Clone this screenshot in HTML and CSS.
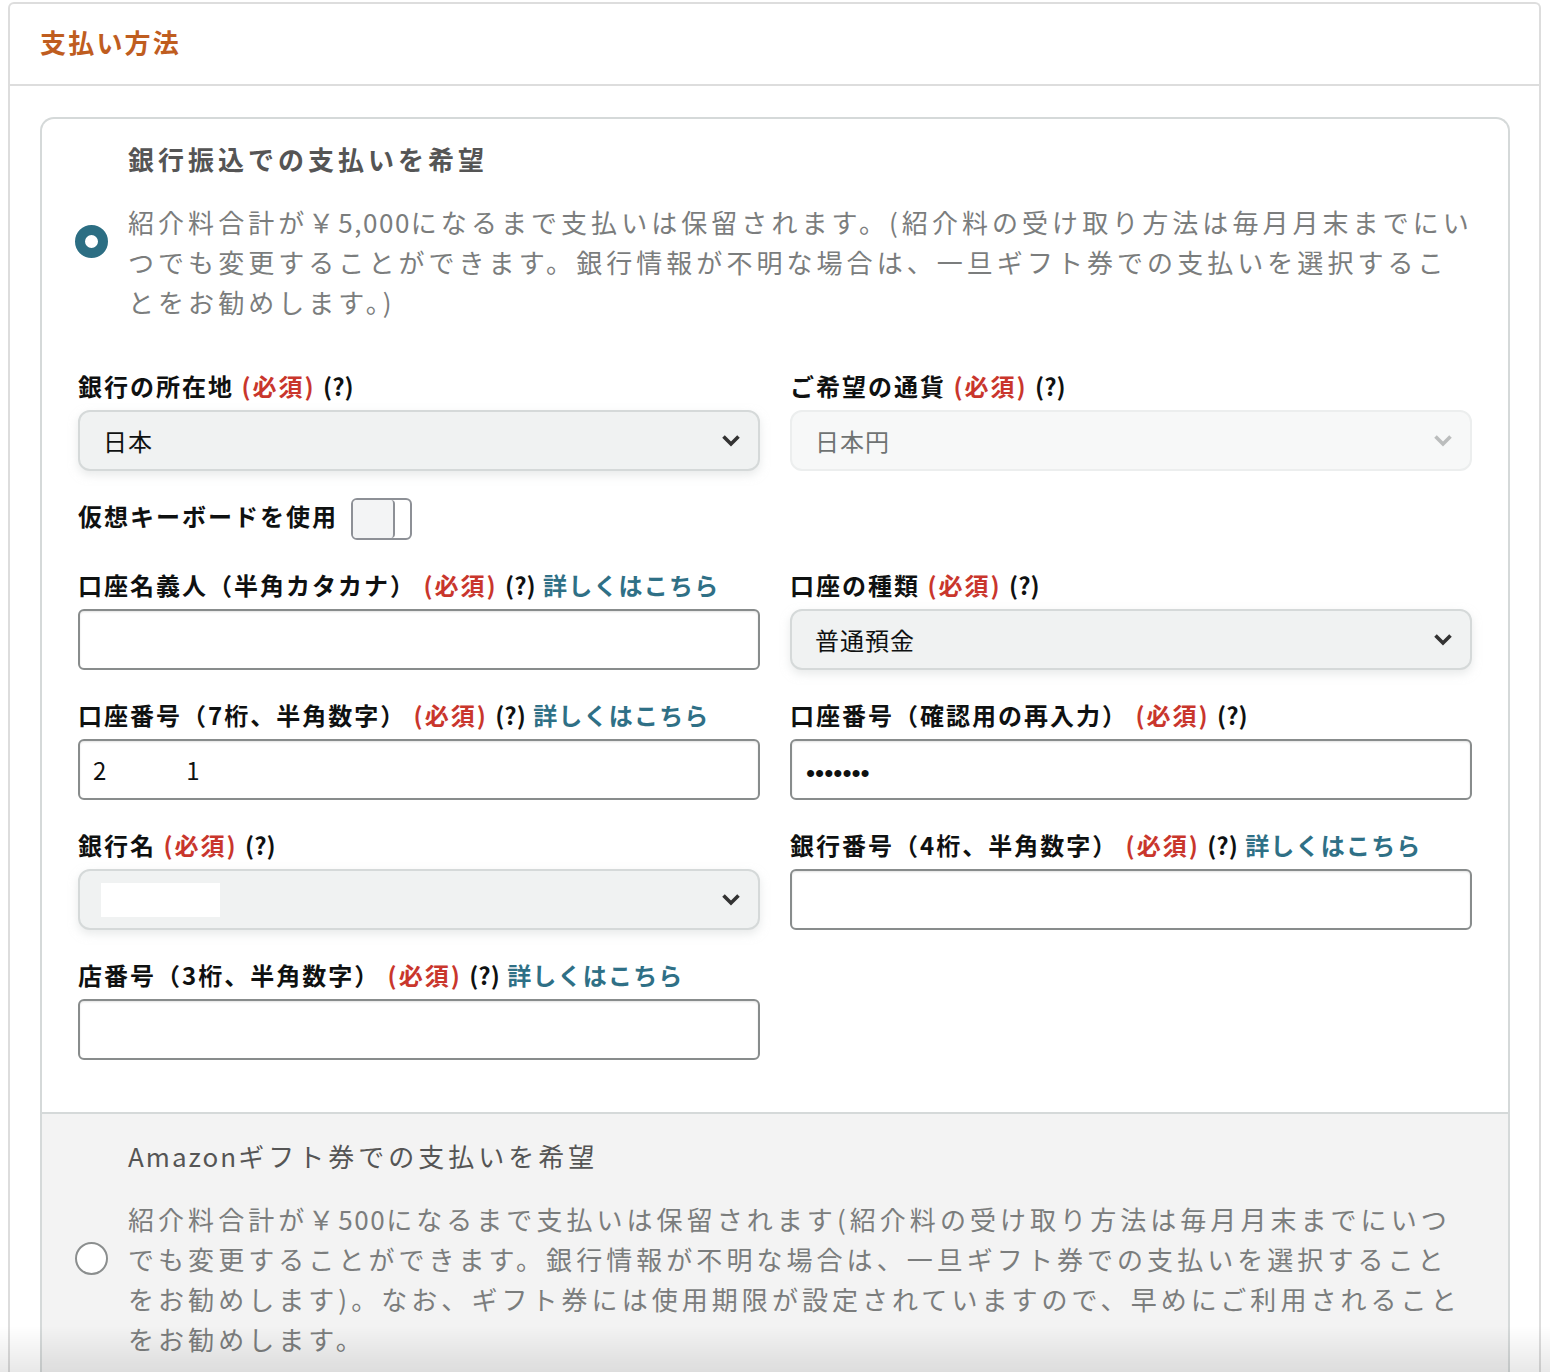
FILE: index.html
```html
<!DOCTYPE html>
<html lang="ja">
<head>
<meta charset="utf-8">
<title>支払い方法</title>
<link rel="stylesheet" href="styles.css">
</head>
<body>
<section class="panel">
  <header class="panel-header">
    <h2 class="panel-title">支払い方法</h2>
  </header>
  <div class="panel-body">
    <div class="card">
      <div class="option">
        <div class="option-row">
          <span class="radio radio-on"></span>
          <div class="option-text">
            <h3 class="option-title">銀行振込での支払いを希望</h3>
            <p class="option-desc">紹介料合計が￥<span class="latin">5,000</span>になるまで支払いは保留されます。(紹介料の受け取り方法は毎月月末までにい<br>つでも変更することができます。銀行情報が不明な場合は、一旦ギフト券での支払いを選択するこ<br>とをお勧めします。)</p>
          </div>
        </div>
        <div class="form-grid">
          <div class="field">
            <label class="field-label">銀行の所在地 <span class="req">(必須)</span> <span class="help">(?)</span></label>
            <div class="select">
              <span>日本</span>
              <svg class="chev" width="20" height="13" viewBox="0 0 20 13"><path d="M2.5 2.5 L10 10 L17.5 2.5" fill="none" stroke="currentColor" stroke-width="3.6"/></svg>
            </div>
          </div>
          <div class="field">
            <label class="field-label">ご希望の通貨 <span class="req">(必須)</span> <span class="help">(?)</span></label>
            <div class="select select-disabled">
              <span>日本円</span>
              <svg class="chev" width="20" height="13" viewBox="0 0 20 13"><path d="M2.5 2.5 L10 10 L17.5 2.5" fill="none" stroke="currentColor" stroke-width="3.6"/></svg>
            </div>
          </div>
          <div class="toggle-row">
            <span class="field-label">仮想キーボードを使用</span>
            <span class="switch"><span class="knob"></span></span>
          </div>
          <div class="field">
            <label class="field-label">口座名義人（半角カタカナ） <span class="req">(必須)</span> <span class="help">(?)</span> <a class="link">詳しくはこちら</a></label>
            <div class="input"></div>
          </div>
          <div class="field">
            <label class="field-label">口座の種類 <span class="req">(必須)</span> <span class="help">(?)</span></label>
            <div class="select">
              <span>普通預金</span>
              <svg class="chev" width="20" height="13" viewBox="0 0 20 13"><path d="M2.5 2.5 L10 10 L17.5 2.5" fill="none" stroke="currentColor" stroke-width="3.6"/></svg>
            </div>
          </div>
          <div class="field">
            <label class="field-label">口座番号（7桁、半角数字） <span class="req">(必須)</span> <span class="help">(?)</span> <a class="link">詳しくはこちら</a></label>
            <div class="input"><span>2</span><span class="digit-gap">1</span></div>
          </div>
          <div class="field">
            <label class="field-label">口座番号（確認用の再入力） <span class="req">(必須)</span> <span class="help">(?)</span></label>
            <div class="input input-pass">•••••••</div>
          </div>
          <div class="field">
            <label class="field-label">銀行名 <span class="req">(必須)</span> <span class="help">(?)</span></label>
            <div class="select select-bank">
              <span class="redact"></span>
              <svg class="chev" width="20" height="13" viewBox="0 0 20 13"><path d="M2.5 2.5 L10 10 L17.5 2.5" fill="none" stroke="currentColor" stroke-width="3.6"/></svg>
            </div>
          </div>
          <div class="field">
            <label class="field-label">銀行番号（4桁、半角数字） <span class="req">(必須)</span> <span class="help">(?)</span> <a class="link">詳しくはこちら</a></label>
            <div class="input"></div>
          </div>
          <div class="field">
            <label class="field-label">店番号（3桁、半角数字） <span class="req">(必須)</span> <span class="help">(?)</span> <a class="link">詳しくはこちら</a></label>
            <div class="input"></div>
          </div>
        </div>
      </div>
      <div class="option option-alt">
        <div class="option-row">
          <span class="radio radio-off"></span>
          <div class="option-text">
            <h3 class="option-title"><span class="latin">Amazon</span>ギフト券での支払いを希望</h3>
            <p class="option-desc">紹介料合計が￥<span class="latin">500</span>になるまで支払いは保留されます(紹介料の受け取り方法は毎月月末までにいつ<br>でも変更することができます。銀行情報が不明な場合は、一旦ギフト券での支払いを選択すること<br>をお勧めします)。なお、ギフト券には使用期限が設定されていますので、早めにご利用されること<br>をお勧めします。</p>
          </div>
        </div>
      </div>
    </div>
  </div>
</section>
<div class="fade"></div>
</body>
</html>
```

FILE: styles.css
```css
* { box-sizing: border-box; }
html, body { margin: 0; background: #fff; }
body {
  font-family: "Noto Sans CJK JP", "Noto Sans", sans-serif;
  color: #0f1111;
}

.panel {
  margin: 2px 9px 0 8px;
  border: 2px solid #dddddd;
  border-bottom: 0;
  border-radius: 6px 6px 0 0;
}
.panel-header {
  height: 82px;
  border-bottom: 2px solid #dddddd;
  display: flex;
  align-items: center;
  padding: 0 0 4px 30px;
}
.panel-title {
  margin: 0;
  font-size: 26px;
  line-height: 1;
  font-weight: 700;
  letter-spacing: 2.2px;
  color: #bf5d1f;
}
.panel-body { padding: 31px 29px 0 30px; }

.card {
  border: 2px solid #d5d9d9;
  border-bottom: 0;
  border-radius: 14px 14px 0 0;
  overflow: hidden;
}

.option-row {
  display: flex;
  align-items: center;
  padding: 20px 20px 0 33px;
}
.radio {
  flex: none;
  width: 33px;
  height: 33px;
  border-radius: 50%;
  margin: 21px 20px 0 0;
  background: #fff;
}
.radio-on { border: 10px solid #2c6e83; }
.radio-off { border: 2px solid #8b8e8e; }

.option-text { min-width: 0; }
.option-title {
  margin: 0;
  font-size: 26px;
  line-height: 40px;
  letter-spacing: 4px;
  font-weight: 700;
  color: #555555;
}
.option-desc {
  margin: 23px 0 0;
  font-size: 26px;
  line-height: 40px;
  letter-spacing: 4.05px;
  color: #7b7d7d;
  white-space: nowrap;
}
.latin { letter-spacing: 1.5px; }

.option-alt {
  background: #f3f3f3;
  border-top: 2px solid #d5d9d9;
  padding-bottom: 60px;
}
.option-alt .option-row { padding-top: 22px; }
.option-alt .option-title { font-weight: 400; }
.option-alt .option-title .latin { letter-spacing: 2px; }

.form-grid {
  display: grid;
  grid-template-columns: 1fr 1fr;
  column-gap: 30px;
  row-gap: 29px;
  padding: 48px 36px 52px 36px;
}
.field { min-width: 0; }
.field-label {
  display: block;
  font-size: 24px;
  line-height: 32px;
  font-weight: 700;
  letter-spacing: 2px;
  margin-bottom: 8px;
  white-space: nowrap;
  color: #0f1111;
}
.req { color: #c9362c; }
.help { letter-spacing: 0; }
.link { color: #2f7086; text-decoration: none; letter-spacing: 1.2px; }

.select {
  height: 61px;
  border: 2px solid #d5d9d9;
  border-radius: 12px;
  background: #f0f2f2;
  box-shadow: 0 4px 10px rgba(213, 217, 217, 0.55);
  display: flex;
  align-items: center;
  justify-content: space-between;
  padding: 0 17px 0 23px;
  font-size: 24px;
  letter-spacing: 1px;
  color: #0f1111;
}
.chev { color: #333; flex: none; }
.select-disabled {
  background: #f7f8f8;
  border-color: #eceeee;
  box-shadow: none;
  color: #6f7373;
}
.select-disabled .chev { color: #bbbdbd; }
.redact {
  width: 119px;
  height: 34px;
  background: #fff;
  margin-left: -2px;
}

.input {
  height: 61px;
  border: 2px solid #888c8c;
  border-radius: 6px;
  background: #fff;
  box-shadow: inset 0 1px 2px rgba(15, 17, 17, 0.12);
  display: flex;
  align-items: center;
  padding: 0 13px;
  font-size: 24px;
  color: #0f1111;
}
.digit-gap { margin-left: 80px; }
.input-pass {
  font-family: "Liberation Sans", sans-serif;
  font-size: 26px;
  padding: 8px 0 0 14px;
  letter-spacing: 0;
}

.toggle-row {
  grid-column: 1 / -1;
  display: flex;
  align-items: center;
  gap: 13px;
  height: 42px;
  margin-top: -2px;
}
.toggle-row .field-label { margin-bottom: 0; padding-bottom: 6px; }
.switch {
  display: flex;
  width: 61px;
  height: 42px;
  border: 2px solid #8d9096;
  border-radius: 6px;
  background: #fff;
}
.knob {
  width: 42px;
  height: 100%;
  border-right: 2px solid #8d9096;
  border-radius: 4px;
  background: #f3f4f5;
}

.fade {
  position: fixed;
  left: 0;
  right: 0;
  bottom: 0;
  height: 46px;
  background: linear-gradient(rgba(0, 0, 0, 0), rgba(0, 0, 0, 0.09));
  pointer-events: none;
}
```
